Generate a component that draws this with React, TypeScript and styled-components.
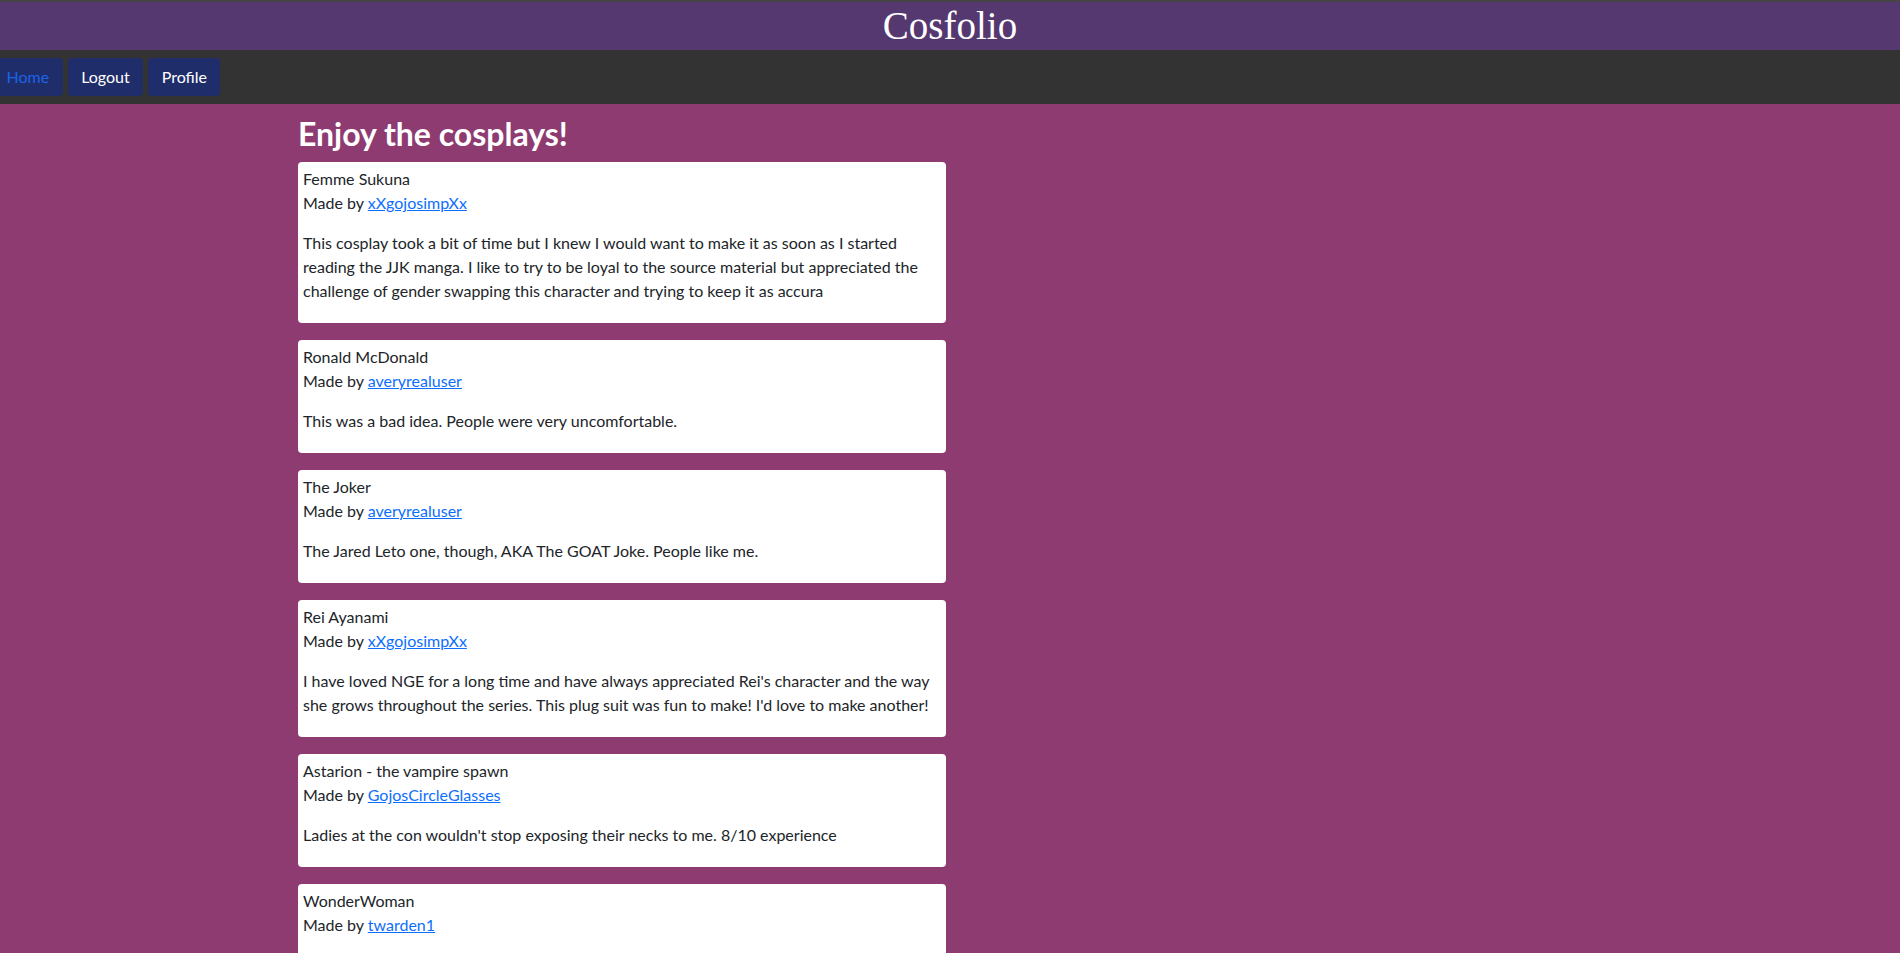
import React from 'react'
import styled, { createGlobalStyle } from 'styled-components'

const GlobalStyle = createGlobalStyle`
  html, body {
    margin: 0;
    padding: 0;
  }

  body {
    background: #8e3b72;
    color: #212529;
    font-family: Lato, "Liberation Sans", sans-serif;
    font-size: 16px;
    line-height: 24px;
  }

  ::-webkit-scrollbar {
    width: 3px;
  }

  ::-webkit-scrollbar-track {
    background: #f0f0f0;
  }

  ::-webkit-scrollbar-thumb {
    background: #c6c6c6;
  }
`

const Header = styled.header`
  height: 48px;
  border-top: 2px solid #454545;
  background: #563870;
  text-align: center;
`

const SiteTitle = styled.h1`
  margin: 0;
  color: #ffffff;
  font-family: "Liberation Serif", "DejaVu Serif", serif;
  font-size: 39px;
  font-weight: 400;
  line-height: 48px;
`

const NavBar = styled.nav`
  background: #333333;
  padding: 8px 0;
`

const NavList = styled.ul`
  list-style: none;
  margin: 0 0 0 -7px;
  padding: 0;
  display: flex;
  gap: 5px;
`

const NavButton = styled.a<{ $active?: boolean }>`
  display: block;
  padding: 7px 13.5px;
  border-radius: 4px;
  background: #1f2d6b;
  color: ${p => (p.$active ? '#1b63e6' : '#ffffff')};
  text-decoration: none;
  font-size: 16px;
  line-height: 24px;
  cursor: pointer;
`

const Main = styled.main`
  max-width: 1304px;
  margin: 0 auto;
`

const PageTitle = styled.h2`
  margin: 11px 0 9px;
  color: #ffffff;
  font-size: 32px;
  font-weight: 700;
  line-height: 38px;
`

const CardList = styled.div`
  display: flex;
  flex-direction: column;
  gap: 17px;
  padding-bottom: 17px;
`

const Card = styled.article`
  width: 648px;
  box-sizing: border-box;
  background: #ffffff;
  border-radius: 4px;
  padding: 5px 5px 4px;
`

const CardTitle = styled.div`
  line-height: 24px;
`

const Maker = styled.div`
  line-height: 24px;
`

const MakerLink = styled.a`
  color: #0d6efd;
  text-decoration: underline;
`

const Description = styled.p`
  margin: 16px 0;
  line-height: 24px;
`

type Cosplay = {
  name: string
  user: string
  description: string
}

const cosplays: Cosplay[] = [
  {
    name: 'Femme Sukuna',
    user: 'xXgojosimpXx',
    description:
      'This cosplay took a bit of time but I knew I would want to make it as soon as I started reading the JJK manga. I like to try to be loyal to the source material but appreciated the challenge of gender swapping this character and trying to keep it as accura',
  },
  {
    name: 'Ronald McDonald',
    user: 'averyrealuser',
    description: 'This was a bad idea. People were very uncomfortable.',
  },
  {
    name: 'The Joker',
    user: 'averyrealuser',
    description: 'The Jared Leto one, though, AKA The GOAT Joke. People like me.',
  },
  {
    name: 'Rei Ayanami',
    user: 'xXgojosimpXx',
    description:
      "I have loved NGE for a long time and have always appreciated Rei's character and the way she grows throughout the series. This plug suit was fun to make! I'd love to make another!",
  },
  {
    name: 'Astarion - the vampire spawn',
    user: 'GojosCircleGlasses',
    description: "Ladies at the con wouldn't stop exposing their necks to me. 8/10 experience",
  },
  {
    name: 'WonderWoman',
    user: 'twarden1',
    description: 'Lasso of truth and all.',
  },
]

const App: React.FC = () => {
  return (
    <>
      <GlobalStyle />
      <Header>
        <SiteTitle>Cosfolio</SiteTitle>
      </Header>
      <NavBar>
        <NavList>
          <li><NavButton $active>Home</NavButton></li>
          <li><NavButton>Logout</NavButton></li>
          <li><NavButton>Profile</NavButton></li>
        </NavList>
      </NavBar>
      <Main>
        <PageTitle>Enjoy the cosplays!</PageTitle>
        <CardList>
          {cosplays.map((c, index) => (
            <Card key={index}>
              <CardTitle>{c.name}</CardTitle>
              <Maker>
                Made by <MakerLink href="#">{c.user}</MakerLink>
              </Maker>
              <Description>{c.description}</Description>
            </Card>
          ))}
        </CardList>
      </Main>
    </>
  )
}

export default App
